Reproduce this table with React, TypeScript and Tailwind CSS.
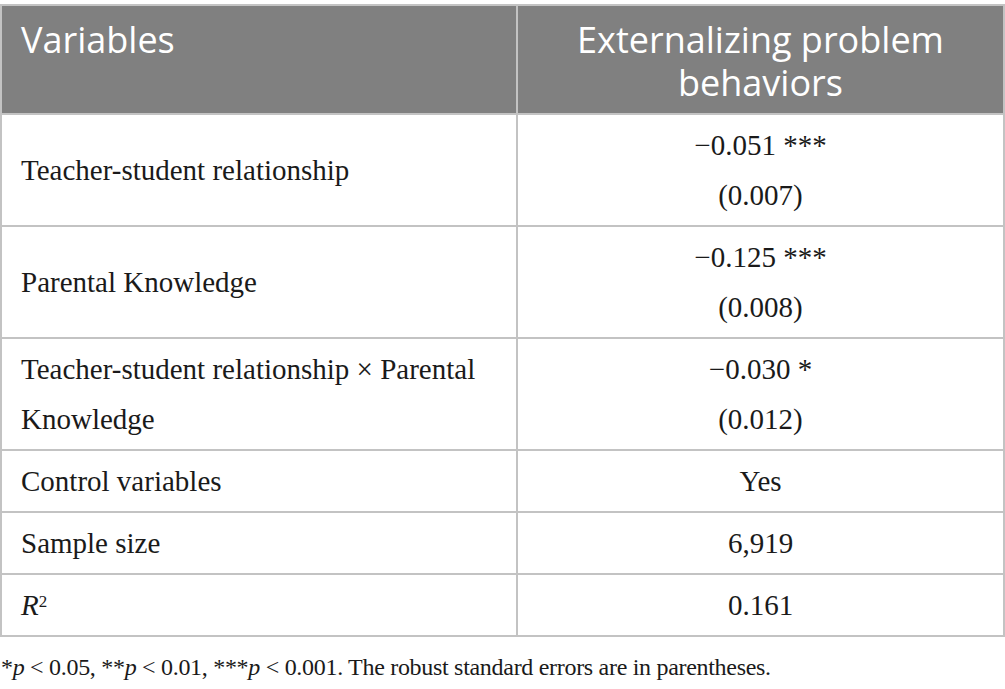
import React from "react";

const serif = { fontFamily: '"Liberation Serif", "Times New Roman", serif' };
const sans = { fontFamily: '"Open Sans", "Noto Sans", sans-serif' };

export default function App() {
  const bodyCell =
    "border-2 border-[#c3c3c3] py-[5px] text-[29px] leading-[50px] text-[#1a1a1a] align-middle";
  const headCell =
    "border-2 border-[#c3c3c3] bg-[#808080] text-white font-normal align-top pt-[12px] pb-[9px] text-[36px] leading-[43px]";
  return (
    <div className="w-[1005px] h-[689px] bg-white overflow-hidden pt-[4px]">
      <table className="w-[1005px] border-collapse table-fixed">
        <colgroup>
          <col className="w-[516px]" />
          <col />
        </colgroup>
        <thead>
          <tr>
            <th className={`${headCell} text-left pl-[19px] pr-[10px]`} style={sans}>
              Variables
            </th>
            <th className={`${headCell} text-center px-[40px]`} style={sans}>
              Externalizing problem behaviors
            </th>
          </tr>
        </thead>
        <tbody style={serif}>
          <tr>
            <td className={`${bodyCell} pl-[19px] pr-[10px] text-left`}>Teacher-student relationship</td>
            <td className={`${bodyCell} text-center`}>
              <div>−0.051 ***</div>
              <div>(0.007)</div>
            </td>
          </tr>
          <tr>
            <td className={`${bodyCell} pl-[19px] pr-[10px] text-left`}>Parental Knowledge</td>
            <td className={`${bodyCell} text-center`}>
              <div>−0.125 ***</div>
              <div>(0.008)</div>
            </td>
          </tr>
          <tr>
            <td className={`${bodyCell} pl-[19px] pr-[10px] text-left`}>
              Teacher-student relationship × Parental Knowledge
            </td>
            <td className={`${bodyCell} text-center`}>
              <div>−0.030 *</div>
              <div>(0.012)</div>
            </td>
          </tr>
          <tr>
            <td className={`${bodyCell} pl-[19px] pr-[10px] text-left`}>Control variables</td>
            <td className={`${bodyCell} text-center`}>Yes</td>
          </tr>
          <tr>
            <td className={`${bodyCell} pl-[19px] pr-[10px] text-left`}>Sample size</td>
            <td className={`${bodyCell} text-center`}>6,919</td>
          </tr>
          <tr>
            <td className={`${bodyCell} pl-[19px] pr-[10px] text-left`}>
              <i>R</i>
              <sup className="text-[17px]">2</sup>
            </td>
            <td className={`${bodyCell} text-center`}>0.161</td>
          </tr>
        </tbody>
      </table>
      <div
        className="mt-[15px] pl-[1px] text-[24px] leading-[30px] tracking-[-0.3px] text-[#1a1a1a]"
        style={serif}
      >
        *<i>p</i> &lt; 0.05, **<i>p</i> &lt; 0.01, ***<i>p</i> &lt; 0.001. The robust standard errors are in parentheses.
      </div>
    </div>
  );
}
